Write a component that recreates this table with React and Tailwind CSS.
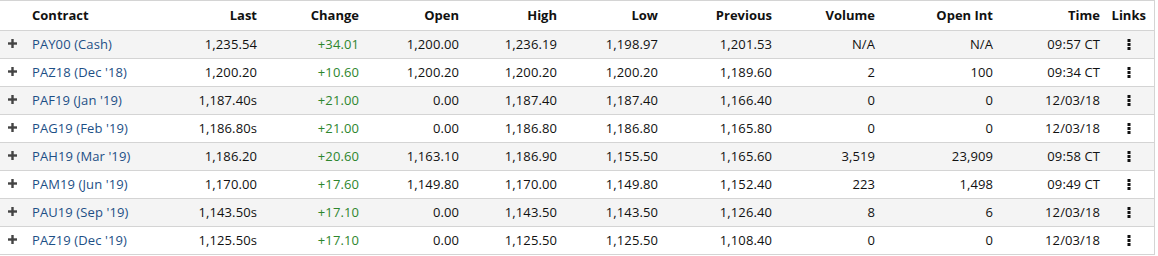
import React from 'react';

const rows = [
  ['PAY00 (Cash)', '1,235.54', '+34.01', '1,200.00', '1,236.19', '1,198.97', '1,201.53', 'N/A', 'N/A', '09:57 CT'],
  ["PAZ18 (Dec '18)", '1,200.20', '+10.60', '1,200.20', '1,200.20', '1,200.20', '1,189.60', '2', '100', '09:34 CT'],
  ["PAF19 (Jan '19)", '1,187.40s', '+21.00', '0.00', '1,187.40', '1,187.40', '1,166.40', '0', '0', '12/03/18'],
  ["PAG19 (Feb '19)", '1,186.80s', '+21.00', '0.00', '1,186.80', '1,186.80', '1,165.80', '0', '0', '12/03/18'],
  ["PAH19 (Mar '19)", '1,186.20', '+20.60', '1,163.10', '1,186.90', '1,155.50', '1,165.60', '3,519', '23,909', '09:58 CT'],
  ["PAM19 (Jun '19)", '1,170.00', '+17.60', '1,149.80', '1,170.00', '1,149.80', '1,152.40', '223', '1,498', '09:49 CT'],
  ["PAU19 (Sep '19)", '1,143.50s', '+17.10', '0.00', '1,143.50', '1,143.50', '1,126.40', '8', '6', '12/03/18'],
  ["PAZ19 (Dec '19)", '1,125.50s', '+17.10', '0.00', '1,125.50', '1,125.50', '1,108.40', '0', '0', '12/03/18'],
];

const headers = ['Last', 'Change', 'Open', 'High', 'Low', 'Previous', 'Volume', 'Open Int', 'Time'];
const widths = [28, 132, 101, 102, 100, 98, 101, 114, 103, 118, 107, 50];

function Plus() {
  return (
    <svg width="9" height="9" viewBox="0 0 9 9" className="block">
      <rect x="3.3" y="0" width="2.4" height="9" fill="#444" />
      <rect x="0" y="3.3" width="9" height="2.4" fill="#444" />
    </svg>
  );
}

function Dots() {
  return (
    <svg width="4" height="11" viewBox="0 0 4 11" className="inline-block">
      <rect x="0.5" y="0" width="3" height="3" fill="#111" />
      <rect x="0.5" y="4" width="3" height="3" fill="#111" />
      <rect x="0.5" y="8" width="3" height="3" fill="#111" />
    </svg>
  );
}

export default function App() {
  return (
    <div className="w-[1158px] h-[256px] bg-white" style={{ fontFamily: '"Open Sans", sans-serif' }}>
      <table className="table-fixed border-collapse text-[13px] text-[#111]" style={{ width: 1154 }}>
        <colgroup>
          {widths.map((w, i) => (
            <col key={i} style={{ width: w }} />
          ))}
        </colgroup>
        <thead>
          <tr className="h-[30px] border-t border-b border-r border-[#d4d4d4]">
            <th className="p-0"></th>
            <th className="px-1 py-0 text-left font-bold">Contract</th>
            {headers.map((h) => (
              <th key={h} className="px-1 py-0 text-right font-bold">{h}</th>
            ))}
            <th className="px-1 py-0 text-center font-bold">Links</th>
          </tr>
        </thead>
        <tbody>
          {rows.map((r, i) => (
            <tr
              key={i}
              className={`h-[28px] border-b border-r border-[#d4d4d4] ${i % 2 === 0 ? 'bg-[#f4f4f4]' : 'bg-white'}`}
            >
              <td className="p-0 pl-[8px] leading-none">
                <div className="-mt-[3px]">
                  <Plus />
                </div>
              </td>
              <td className="px-1 py-0 text-left text-[#1d4f86] tracking-[0.1px]">{r[0]}</td>
              {r.slice(1).map((v, j) => (
                <td key={j} className={`px-1 py-0 text-right tracking-[0.1px] ${j === 1 ? 'text-[#2e862e]' : ''}`}>{v}</td>
              ))}
              <td className="px-1 py-0 text-center leading-none">
                <div className="-mt-[3px]">
                  <Dots />
                </div>
              </td>
            </tr>
          ))}
        </tbody>
      </table>
    </div>
  );
}
